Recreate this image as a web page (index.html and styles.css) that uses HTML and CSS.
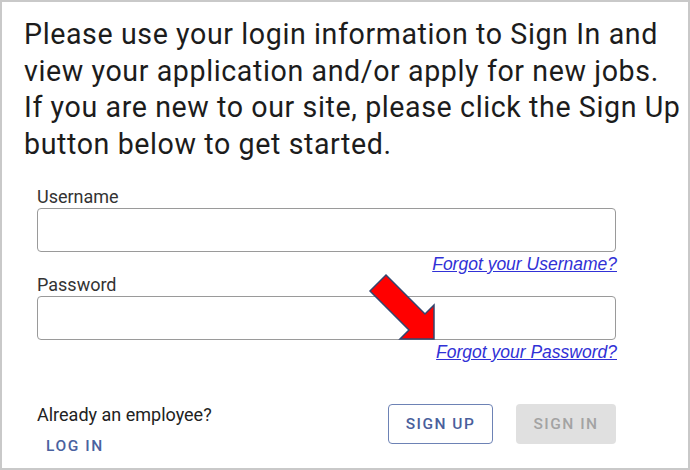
FILE: index.html
```html
<!DOCTYPE html>
<html lang="en">

<head>
    <meta charset="utf-8">
    <meta name="viewport" content="width=device-width, initial-scale=1.0">
    <title>Sign In</title>
    <link rel="stylesheet" href="styles.css">
</head>

<body>
    <div class="ramme">
        <p class="intro">Please use your login information to Sign In and<br>
            view your application and/or apply for new jobs.<br>
            If you are new to our site, please click the Sign Up<br>
            button below to get started.</p>

        <form class="login">
            <label for="username">Username</label>
            <input type="text" id="username">
            <a href="#" class="glemt">Forgot your Username?</a>

            <label for="password">Password</label>
            <div class="felt">
                <input type="password" id="password">
                <svg class="pil" width="80" height="80" viewBox="0 0 80 80">
                    <polygon points="26,5 65,44 74,35 74,69 40,69 49,60 10,21" fill="#ff0000" stroke="#34456e" stroke-width="1.5" stroke-linejoin="miter" />
                </svg>
            </div>
            <a href="#" class="glemt">Forgot your Password?</a>
        </form>

        <div class="bund">
            <div class="medarbejder">
                <p>Already an employee?</p>
                <button type="button" class="tekstknap">LOG IN</button>
            </div>
            <div class="knapper">
                <button type="button" class="signup">SIGN UP</button>
                <button type="button" class="signin" disabled>SIGN IN</button>
            </div>
        </div>
    </div>
</body>

</html>
```

FILE: styles.css
```css
body {
    margin: 0;
    padding: 0;
    background-color: white;
}

.ramme {
    box-sizing: border-box;
    width: 690px;
    height: 470px;
    border: 2px solid #c9c9c9;
    padding: 14px 72px 0 35px;
    font-family: Roboto, sans-serif;
    color: #1c1c1c;
}

.intro {
    margin: 0 0 25px -13px;
    font-size: 28.6px;
    letter-spacing: 0.6px;
    line-height: 36.5px;
    width: 670px;
    white-space: nowrap;
}

.login {
    display: flex;
    flex-direction: column;
}

label {
    font-size: 18px;
    line-height: 20px;
    color: #333;
    margin-bottom: 1px;
}

input {
    box-sizing: border-box;
    width: 100%;
    height: 44px;
    margin: 0;
    border: 1px solid #9a9a9a;
    border-radius: 4px;
    background-color: white;
}

.felt {
    position: relative;
}

.pil {
    position: absolute;
    left: 323px;
    top: -26px;
}

.glemt {
    align-self: flex-end;
    font-family: "Liberation Sans", Arial, sans-serif;
    font-style: italic;
    font-size: 17.5px;
    line-height: 20px;
    color: #3131d6;
    margin: 2px -1px 1px 0;
}

.bund {
    display: flex;
    justify-content: space-between;
    margin-top: 42px;
}

.medarbejder p {
    margin: 0;
    font-size: 18px;
    line-height: 20px;
    color: #222;
}

.tekstknap {
    margin-top: 12px;
    padding: 0 9px;
    border: none;
    background: none;
    font-family: Roboto, sans-serif;
    font-size: 15.5px;
    font-weight: 500;
    letter-spacing: 1.6px;
    color: #4a62a0;
}

.knapper {
    display: flex;
    gap: 23px;
    margin-top: -1px;
}

.knapper button {
    height: 40px;
    border-radius: 4px;
    font-family: Roboto, sans-serif;
    font-size: 15.5px;
    font-weight: 500;
    letter-spacing: 1.5px;
}

.signup {
    width: 105px;
    background-color: white;
    border: 1.5px solid #6d82b5;
    color: #4a5f9c;
}

.signin {
    width: 100px;
    background-color: #e0e0e0;
    border: none;
    color: #a3a3a3;
}
```
